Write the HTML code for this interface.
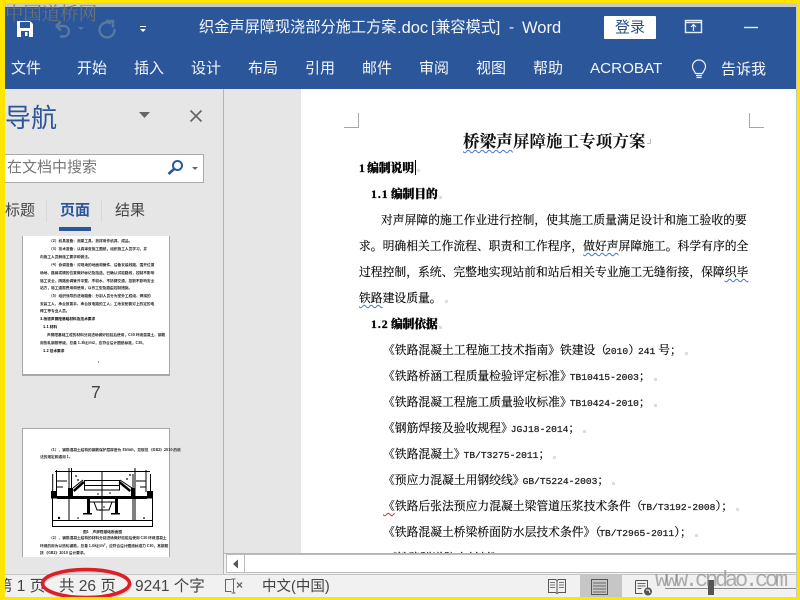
<!DOCTYPE html>
<html lang="zh-CN"><head><meta charset="utf-8"><title>Word</title>
<style>
html,body{margin:0;padding:0;width:800px;height:600px;overflow:hidden;background:#ffe600}
*{box-sizing:border-box}
#app{position:absolute;left:0;top:0;width:800px;height:600px;overflow:hidden;font-family:"Liberation Sans","Noto Sans CJK SC",sans-serif}
.a{position:absolute}
.t{position:absolute;white-space:nowrap;line-height:20px;height:20px}
.w{color:#f4f6fa;font-size:15px}
.d{font-family:"Liberation Serif","Noto Serif CJK SC",serif;font-size:11.8px;color:#000;-webkit-text-stroke:.15px #000}
.d i{font-style:normal;font-family:"Liberation Mono",monospace;font-size:9.6px;font-weight:400;-webkit-text-stroke:.25px #222;color:#222;margin-left:-2px}
.h{font-family:"Noto Serif CJK SC",serif;font-weight:900;font-size:11.7px;color:#000;-webkit-text-stroke:.3px #000}
.wv{text-decoration:underline wavy #3f78c8 1px;text-underline-offset:2px;-webkit-text-stroke:.15px #000}
.wr{text-decoration:underline wavy #d23030 1px;text-underline-offset:2px}
.pm{display:inline-block;width:3px;height:3px;background:#ddd;margin-left:3px;vertical-align:-1px}
.s{font-size:15.5px;color:#444}
.n{position:absolute;white-space:nowrap;font-family:"Noto Sans CJK SC",sans-serif;font-size:3.7px;line-height:6px;height:6px;color:#222;font-weight:700;filter:blur(.2px)}
</style></head><body>
<div id="app">
<!-- frame -->
<div class="a" style="left:5px;top:3px;width:792px;height:594px;background:#fff"></div>
<div class="a" style="left:5px;top:3px;width:792px;height:4px;background:#c9c9c9"></div>
<!-- title bar -->
<div class="a" style="left:5px;top:7px;width:791px;height:82px;background:#2b579a"></div>
<svg class="a" style="left:0;top:0" width="160" height="50" viewBox="0 0 160 50">
 <path d="M17 21h13l3 3v13H17z" fill="#fff"/>
 <rect x="20" y="22" width="10" height="6" fill="#2b579a"/>
 <rect x="21" y="31" width="8" height="6" fill="#2b579a"/>
 <rect x="25" y="32" width="2.5" height="4" fill="#fff"/>
 <path d="M56 26h9a5.500 5.500 0 0 1 0 10.500h-5M56 26l5-4.500M56 26l5 4.500" fill="none" stroke="#57789f" stroke-width="2.4"/>
 <path d="M78 27h6l-3 3z" fill="#57789f"/>
 <path d="M111 23.500a7.500 7.500 0 1 0 3.500 5.500M106 21h7v6.500" fill="none" stroke="#57789f" stroke-width="2.400"/>
 <rect x="140" y="26" width="6" height="1" fill="#fff"/><path d="M140 29h6l-3 3z" fill="#fff"/>
</svg>
<div class="t w" style="left:199px;top:18px;font-size:15.2px">织金声屏障现浇部分施工方案</div>
<div class="t w" style="left:397px;top:18px;font-size:16.5px">.doc</div>
<div class="t w" style="left:431px;top:18px;font-size:15.2px">[兼容模式]</div>
<div class="t w" style="left:509px;top:18px;font-size:15.2px">-</div>
<div class="t w" style="left:522px;top:18px;font-size:16.5px">Word</div>
<div class="a" style="left:604px;top:16px;width:52px;height:23px;background:#fff;border-radius:1px"></div>
<div class="t" style="left:615px;top:18px;font-size:15px;color:#2b4f86">登录</div>
<svg class="a" style="left:680px;top:15px" width="90" height="25" viewBox="0 0 90 25">
 <rect x="5.500" y="5.500" width="16" height="12" fill="none" stroke="#e8edf5" stroke-width="1.400"/>
 <path d="M6 7.500h15" stroke="#e8edf5" stroke-width="1.400"/>
 <path d="M13.500 16v-6M11 12l2.500-2.500L16 12" fill="none" stroke="#e8edf5" stroke-width="1.200"/>
 <path d="M64 12.500h14" stroke="#e8edf5" stroke-width="1.400"/>
</svg>
<!-- tabs -->
<div class="t w" style="left:11px;top:59px">文件</div>
<div class="t w" style="left:77px;top:59px">开始</div>
<div class="t w" style="left:134px;top:59px">插入</div>
<div class="t w" style="left:191px;top:59px">设计</div>
<div class="t w" style="left:248px;top:59px">布局</div>
<div class="t w" style="left:305px;top:59px">引用</div>
<div class="t w" style="left:362px;top:59px">邮件</div>
<div class="t w" style="left:419px;top:59px">审阅</div>
<div class="t w" style="left:476px;top:59px">视图</div>
<div class="t w" style="left:533px;top:59px">帮助</div>
<div class="t w" style="left:590px;top:59px;font-size:15.2px">ACROBAT</div>
<svg class="a" style="left:690px;top:58px" width="18" height="24" viewBox="0 0 18 24">
 <path d="M5.500 15.500C4.500 13 2.500 11.500 2.500 8.500a6.500 6.500 0 0 1 13 0c0 3-2 4.500-3 7z" fill="none" stroke="#eef2f8" stroke-width="1.200"/>
 <path d="M6 17.500h6M6.500 19.500h5" stroke="#eef2f8" stroke-width="1.300"/>
</svg>
<div class="t w" style="left:721px;top:60px">告诉我</div>
<!-- watermark top -->
<div class="t" style="left:5px;top:1px;height:24px;line-height:24px;font-family:'Noto Serif CJK SC',serif;font-size:18.400px;color:rgba(115,115,115,.9);font-weight:400">中国道桥网</div>
<!-- nav pane -->
<div class="a" style="left:5px;top:89px;width:218px;height:485px;background:#e6e6e6"></div>
<div class="a" style="left:223px;top:89px;width:1px;height:485px;background:#b4b4b4"></div>
<div class="a" style="left:224px;top:89px;width:77px;height:465px;background:#e6e6e6"></div>
<div class="a" style="left:5px;top:89px;width:55px;height:50px;overflow:hidden">
 <div class="t" style="left:0;top:13px;height:32px;line-height:32px;font-size:26px;color:#2b579a">导航</div>
</div>
<svg class="a" style="left:130px;top:100px" width="80" height="30" viewBox="0 0 80 30">
 <path d="M9 12h11l-5.500 6z" fill="#666"/>
 <path d="M60.500 10.500l11 11M71.500 10.500l-11 11" stroke="#666" stroke-width="1.700"/>
</svg>
<div class="a" style="left:5px;top:154px;width:199px;height:29px;background:#fff;border:1px solid #ababab;border-left:0"></div>
<div class="t" style="left:7px;top:158px;font-size:15px;color:#777">在文档中搜索</div>
<svg class="a" style="left:165px;top:158px" width="36" height="20" viewBox="0 0 36 20">
 <circle cx="12.500" cy="7.500" r="4.500" fill="none" stroke="#2b579a" stroke-width="2"/>
 <path d="M9 11l-5.500 5" stroke="#2b579a" stroke-width="2.600"/>
 <path d="M27 9h6l-3 3z" fill="#666"/>
</svg>
<div class="t" style="left:5px;top:201px;font-size:15px;color:#444">标题</div>
<div class="t" style="left:60px;top:201px;font-size:15px;color:#2b579a;font-weight:700">页面</div>
<div class="t" style="left:115px;top:201px;font-size:15px;color:#444">结果</div>
<div class="a" style="left:46px;top:199px;width:1px;height:23px;background:#d8d8d8"></div>
<div class="a" style="left:101px;top:199px;width:1px;height:23px;background:#d8d8d8"></div>
<div class="a" style="left:59px;top:227px;width:32px;height:4px;background:#2b579a"></div>
<!-- thumb 1 -->
<div class="a" style="left:22px;top:236px;width:148px;height:140px;background:#fff;border:1px solid #a5a8ad;border-top:0;border-bottom-width:2px"></div>
<div class="n" style="left:49px;top:239px">（2）机具准备：测量工具、放样用作机具、成品。</div>
<div class="n" style="left:49px;top:247px">（3）技术准备：认真审查施工图纸，组织施工人员学习，并</div>
<div class="n" style="left:40px;top:255px">向施工人员解施工要求和做法。</div>
<div class="n" style="left:49px;top:263px">（4）协调准备：对现场的地面和管件、设备安装线路、围开位置</div>
<div class="n" style="left:40px;top:271px">场地、路肩或横的位置做好标记及指选，已确认试验路线，控制不影响</div>
<div class="n" style="left:40px;top:279px">施工安全，隔路协调管开平整、不积水、不妨碍交通，控制不影响安全</div>
<div class="n" style="left:40px;top:286px">站方，施工通报费用和使用，以作工型及路由控制措施。</div>
<div class="n" style="left:49px;top:294px">（5）组织领导的进场路备：分别人员分为室外工程组、焊接的</div>
<div class="n" style="left:40px;top:302px">安装工人、承台放置手、承台放电路的工人；工地安配套对上的定的电</div>
<div class="n" style="left:40px;top:309px">焊工等专业人员。</div>
<div class="n" style="left:40px;top:317px;font-weight:900">3.桥梁声屏障基础材料及技术要求</div>
<div class="n" style="left:43px;top:325px;font-weight:900">1.1 材料</div>
<div class="n" style="left:47px;top:333px">声屏障基础工程的材料分别进场做好检验后使用，C30 环境混凝土、钢筋</div>
<div class="n" style="left:40px;top:341px">用热轧钢筋等级，总量 1.3kg/m2，应符合设计图纸标准，C30。</div>
<div class="n" style="left:43px;top:349px;font-weight:900">1.2 技术要求</div>
<div class="a" style="left:98px;top:361px;width:1px;height:2px;background:#999"></div>
<div class="t" style="left:91px;top:382px;font-size:17.500px;color:#444">7</div>
<!-- thumb 2 -->
<div class="a" style="left:22px;top:428px;width:148px;height:129px;background:#fff;border:1px solid #a5a8ad;border-bottom:0"></div>
<div class="n" style="left:49px;top:448px">（1）、钢筋混凝土结构的钢筋保护层厚度为 35mm，见规范 《GB2》2010 的说</div>
<div class="n" style="left:40px;top:455px">法的规定和通用 1。</div>
<svg class="a" style="left:40px;top:460px" width="120" height="70" viewBox="0 0 120 70">
 <g fill="none" stroke="#000" stroke-width="1">
  <rect x="12.500" y="37.500" width="100" height="29"/>
  <path d="M12.500 60.500h100"/>
  <path d="M15 11.500h95M12.700 14v18M16.500 10v22M110.500 14v18M106 10v22"/>
  <path d="M29 8v53M31.500 8v24M62 12v48M93 14v47M95 8v53"/>
  <rect x="44.500" y="20.500" width="35" height="9.500"/>
  <path d="M44 25.500h36M33 28l10-8M92 28l-12-8"/>
  <path d="M17 21h10M17 27h6M96 21h10M100 27h6"/>
  <path d="M50 42h25M54 42l3 8h12l3-8"/>
 </g>
 <g fill="#000">
  <rect x="11" y="31" width="6" height="7.500"/><rect x="107" y="31" width="6" height="7.500"/>
  <rect x="17" y="36" width="90" height="3"/>
  <rect x="28" y="28" width="5" height="8"/><rect x="91" y="28" width="4" height="8"/>
  <rect x="47" y="39" width="3" height="14"/><rect x="75" y="39" width="3" height="14"/>
  <rect x="43" y="53" width="9" height="1.500"/><rect x="71" y="53" width="9" height="1.500"/>
  <path d="M33 30l10-9 1.500 2-10 9zM91 30l-11-9-1.500 2 11 9z"/>
  <circle cx="19" cy="58" r="1.200"/><circle cx="38" cy="20" r=".9"/><circle cx="87" cy="19" r=".9"/><circle cx="36" cy="16" r=".9"/><circle cx="90" cy="15" r=".9"/><circle cx="58" cy="34" r=".8"/><circle cx="70" cy="33" r=".8"/><circle cx="64" cy="47" r=".8"/><circle cx="60" cy="50" r=".8"/><circle cx="104" cy="58" r=".9"/><circle cx="38" cy="58" r=".8"/>
 </g>
</svg>
<div class="n" style="left:83px;top:530px">图1　声屏障基础断面图</div>
<div class="n" style="left:49px;top:536px">（2）、钢筋混凝土结构的材料分别进场做好检验后使用 C30 环境混凝土</div>
<div class="n" style="left:40px;top:544px">环境的用为以热轧钢筋，总量 1.0kg/m³，应符合设计图纸标准力 C30，其钢筋</div>
<div class="n" style="left:40px;top:551px;height:6px;overflow:hidden">按 《GB2》2010 设计要求。</div>
<!-- page -->
<div class="a" style="left:301px;top:89px;width:495px;height:465px;background:#fff;overflow:hidden"></div>
<div class="a" style="left:796px;top:7px;width:1px;height:590px;background:#c9c9c9"></div>
<svg class="a" style="left:340px;top:108px" width="430" height="24" viewBox="0 0 430 24">
 <path d="M4 19.500h14.500V5M409.500 5v14.500H424" fill="none" stroke="#a6a6a6" stroke-width="1"/>
</svg>
<div class="t" style="left:463px;top:130px;font-family:'Noto Serif CJK SC',serif;font-weight:700;font-size:16.600px;color:#111"><span class="wv">桥梁声</span>屏障施工专项方案</div>
<div class="a" style="left:647px;top:139px;width:4px;height:5px;border:solid #bbb;border-width:0 1px 1px 0"></div>
<div class="t h" style="left:359px;top:158px"><span style="font-family:'Liberation Serif',serif">1</span>&#8201;编制说明</div>
<div class="a" style="left:415px;top:160px;width:1px;height:15px;background:#000"></div>
<div class="a" style="left:417px;top:169px;width:3px;height:3px;background:#ddd"></div>
<div class="t h" style="left:371px;top:184px"><span style="font-family:'Liberation Serif',serif;letter-spacing:1px">1.1</span>&#8201;编制目的<span class="pm" style="margin-left:1px"></span></div>
<div class="t d" style="left:381px;top:210px">对声屏障的施工作业进行控制，使其施工质量满足设计和施工验收的要</div>
<div class="t d" style="left:359px;top:236px">求。明确相关工作流程、职责和工作程序，<span class="wv">做好声</span>屏障施工。科学有序的全</div>
<div class="t d" style="left:359px;top:262px">过程控制，系统、完整地实现站前和站后相关专业施工无缝衔接，保障<span class="wv">织毕</span></div>
<div class="t d" style="left:359px;top:288px"><span class="wv">铁路</span>建设质量。<span class="pm"></span></div>
<div class="t h" style="left:371px;top:314px"><span style="font-family:'Liberation Serif',serif;letter-spacing:1px">1.2</span>&#8201;编制依据<span class="pm" style="margin-left:1px"></span></div>
<div class="t d" style="left:383px;top:340px">《铁路混凝土工程施工技术指南》铁建设（<i>2010</i>）<i>241</i> 号；<span class="pm"></span></div>
<div class="t d" style="left:383px;top:366px">《铁路桥涵工程质量检验评定标准》<i>TB10415-2003</i>；<span class="pm"></span></div>
<div class="t d" style="left:383px;top:392px">《铁路混凝工程施工质量验收标准》<i>TB10424-2010</i>；<span class="pm"></span></div>
<div class="t d" style="left:383px;top:418px">《钢筋焊接及验收规程》<i>JGJ18-2014</i>；<span class="pm"></span></div>
<div class="t d" style="left:383px;top:444px">《铁路混凝土》<i>TB/T3275-2011</i>；<span class="pm"></span></div>
<div class="t d" style="left:383px;top:470px">《预应力混凝土用钢绞线》<i>GB/T5224-2003</i>；<span class="pm"></span></div>
<div class="t d" style="left:383px;top:496px"><span class="wr">《</span>铁路后张法预应力混凝土梁管道压浆技术条件（<i>TB/T3192-2008</i>）；<span class="pm"></span></div>
<div class="t d" style="left:383px;top:522px">《铁路混凝土桥梁桥面防水层技术条件》（<i>TB/T2965-2011</i>）；<span class="pm"></span></div>
<div class="a" style="left:385px;top:540px;width:150px;height:13px;overflow:hidden">
 <div class="t d" style="left:0;top:8px">《铁路隧道防水材料》</div>
</div>
<!-- scrollbar -->
<div class="a" style="left:224px;top:553px;width:572px;height:1px;background:#b4b4b4"></div>
<div class="a" style="left:224px;top:554px;width:572px;height:20px;background:#f1f1f1"></div>
<div class="a" style="left:226px;top:554px;width:19px;height:19px;background:#fff;border:1px solid #bdbdbd"></div>
<div class="a" style="left:245px;top:554px;width:551px;height:19px;background:#fff;border:1px solid #bdbdbd;border-left:0;border-right:0"></div>
<svg class="a" style="left:230px;top:558px" width="12" height="12" viewBox="0 0 12 12"><path d="M8 1.500v9L3 6z" fill="#555"/></svg>
<!-- status bar -->
<div class="a" style="left:5px;top:574px;width:791px;height:23px;background:#f1f1f1;border-top:1px solid #c6c6c6"></div>
<div class="a" style="left:5px;top:575px;width:50px;height:22px;overflow:hidden"><div class="t s" style="left:-8px;top:2px">第 1 页</div></div>
<div class="t s" style="left:59px;top:577px">共 26 页</div>
<div class="t s" style="left:135px;top:577px">9241 个字</div>
<div class="t s" style="left:262px;top:577px;font-size:14.500px">中文(中国)</div>
<svg class="a" style="left:224px;top:578px" width="22" height="18" viewBox="0 0 22 18">
 <path d="M7.500 1.500h-6v12h6M9.500 1v14M7.500 1h4M7.500 15h4" fill="none" stroke="#666"/>
 <path d="M13 4.500l5 5M18 4.500l-5 5" stroke="#666" stroke-width="1.400"/>
</svg>
<div class="a" style="left:580px;top:575px;width:42px;height:22px;background:#c6c6c6"></div>
<svg class="a" style="left:545px;top:576px" width="110" height="21" viewBox="0 0 110 21">
 <path d="M3.500 3.500h7l1.500 1 1.500-1h7v13h-7l-1.500 1-1.500-1h-7zM12 4.500v12" fill="none" stroke="#555"/>
 <path d="M5 6.500h5M5 9h5M5 11.500h5M14 6.500h5M14 9h5M14 11.500h5" stroke="#777"/>
 <rect x="46.500" y="3.500" width="16" height="15" fill="none" stroke="#555"/>
 <path d="M48 7h13M48 10h13M48 13h13M48 16h13" stroke="#666"/>
 <path d="M90.500 4.500h12v8M90.500 4.500v13h7" fill="none" stroke="#555"/>
 <path d="M92.500 7.500h8M92.500 10h8M92.500 12.500h4" stroke="#666"/>
 <circle cx="103" cy="15.500" r="4" fill="#555"/><path d="M101 14h3l1 3" stroke="#fff" fill="none"/>
</svg>
<div class="a" style="left:665px;top:588px;width:131px;height:1px;background:#8a8a8a"></div>
<div class="a" style="left:708px;top:580px;width:6px;height:15px;background:#555"></div>
<div class="t" style="left:655px;top:569px;height:24px;line-height:24px;font-family:'Liberation Mono',monospace;font-size:22px;letter-spacing:-3.200px;color:rgba(125,125,125,.6);font-weight:400">www.cndao.com</div>
<!-- red ellipse -->
<svg class="a" style="left:30px;top:560px" width="115" height="40" viewBox="0 0 115 40">
 <ellipse cx="57" cy="25" rx="43.500" ry="14" fill="none" stroke="#999" stroke-width="3" opacity=".45"/>
 <ellipse cx="56" cy="23.500" rx="43.500" ry="14" fill="none" stroke="#dc1f26" stroke-width="3.500"/>
</svg>
<!-- yellow frame -->
<div class="a" style="left:0;top:0;width:800px;height:3px;background:#ffe600"></div>
<div class="a" style="left:0;top:0;width:4px;height:600px;background:#ffe600"></div>
<div class="a" style="left:797px;top:0;width:3px;height:600px;background:#ffe600"></div>
<div class="a" style="left:0;top:597px;width:800px;height:3px;background:#ffe600"></div>
</div>
</body></html>
